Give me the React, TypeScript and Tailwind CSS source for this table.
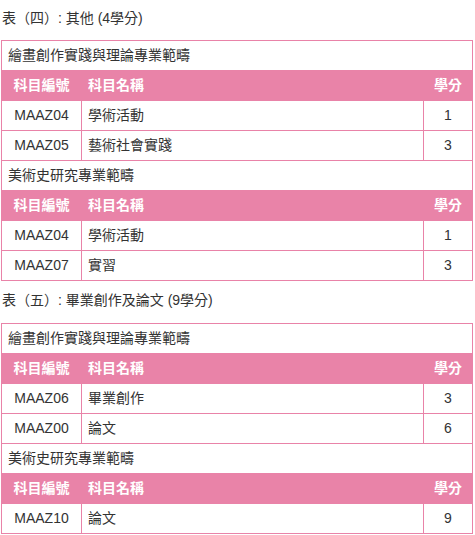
import React from "react";

type Course = { code: string; name: string; credit: number };
type Section = { title: string; courses: Course[] };

const PINK = "border-[#e983a8]";

const TABLE4: Section[] = [
  {
    title: "繪畫創作實踐與理論專業範疇",
    courses: [
      { code: "MAAZ04", name: "學術活動", credit: 1 },
      { code: "MAAZ05", name: "藝術社會實踐", credit: 3 },
    ],
  },
  {
    title: "美術史研究專業範疇",
    courses: [
      { code: "MAAZ04", name: "學術活動", credit: 1 },
      { code: "MAAZ07", name: "實習", credit: 3 },
    ],
  },
];

const TABLE5: Section[] = [
  {
    title: "繪畫創作實踐與理論專業範疇",
    courses: [
      { code: "MAAZ06", name: "畢業創作", credit: 3 },
      { code: "MAAZ00", name: "論文", credit: 6 },
    ],
  },
  {
    title: "美術史研究專業範疇",
    courses: [{ code: "MAAZ10", name: "論文", credit: 9 }],
  },
];

function CourseTable({ sections }: { sections: Section[] }) {
  return (
    <table className="ml-[1px] w-[472px] table-fixed border-collapse text-[14px] text-[#333]">
      <colgroup>
        <col className="w-[80px]" />
        <col />
        <col className="w-[49px]" />
      </colgroup>
      <tbody>
        {sections.map((s, i) => (
          <React.Fragment key={i}>
            <tr className="h-[30px]">
              <td colSpan={3} className={`border ${PINK} px-[6px] py-0`}>{s.title}</td>
            </tr>
            <tr className="h-[30px] bg-[#e983a8] font-bold text-white">
              <td className={`border ${PINK} text-center`}>科目編號</td>
              <td className={`border ${PINK} px-[6px]`}>科目名稱</td>
              <td className={`border ${PINK} text-center`}>學分</td>
            </tr>
            {s.courses.map((c, j) => (
              <tr key={j} className="h-[30px]">
                <td className={`border ${PINK} text-center`}>{c.code}</td>
                <td className={`border ${PINK} px-[6px]`}>{c.name}</td>
                <td className={`border ${PINK} text-center`}>{c.credit}</td>
              </tr>
            ))}
          </React.Fragment>
        ))}
      </tbody>
    </table>
  );
}

export default function App() {
  return (
    <div className="w-[475px] bg-white font-['Liberation_Sans','Noto_Sans_CJK_TC',sans-serif] text-[#333]">
      <p className="pl-[2px] pt-[8px] pb-[12px] text-[14px] leading-[20px]">表（四）: 其他 (4學分)</p>
      <CourseTable sections={TABLE4} />
      <p className="pl-[2px] pt-[9px] pb-[13px] text-[14px] leading-[20px]">表（五）: 畢業創作及論文 (9學分)</p>
      <CourseTable sections={TABLE5} />
    </div>
  );
}
